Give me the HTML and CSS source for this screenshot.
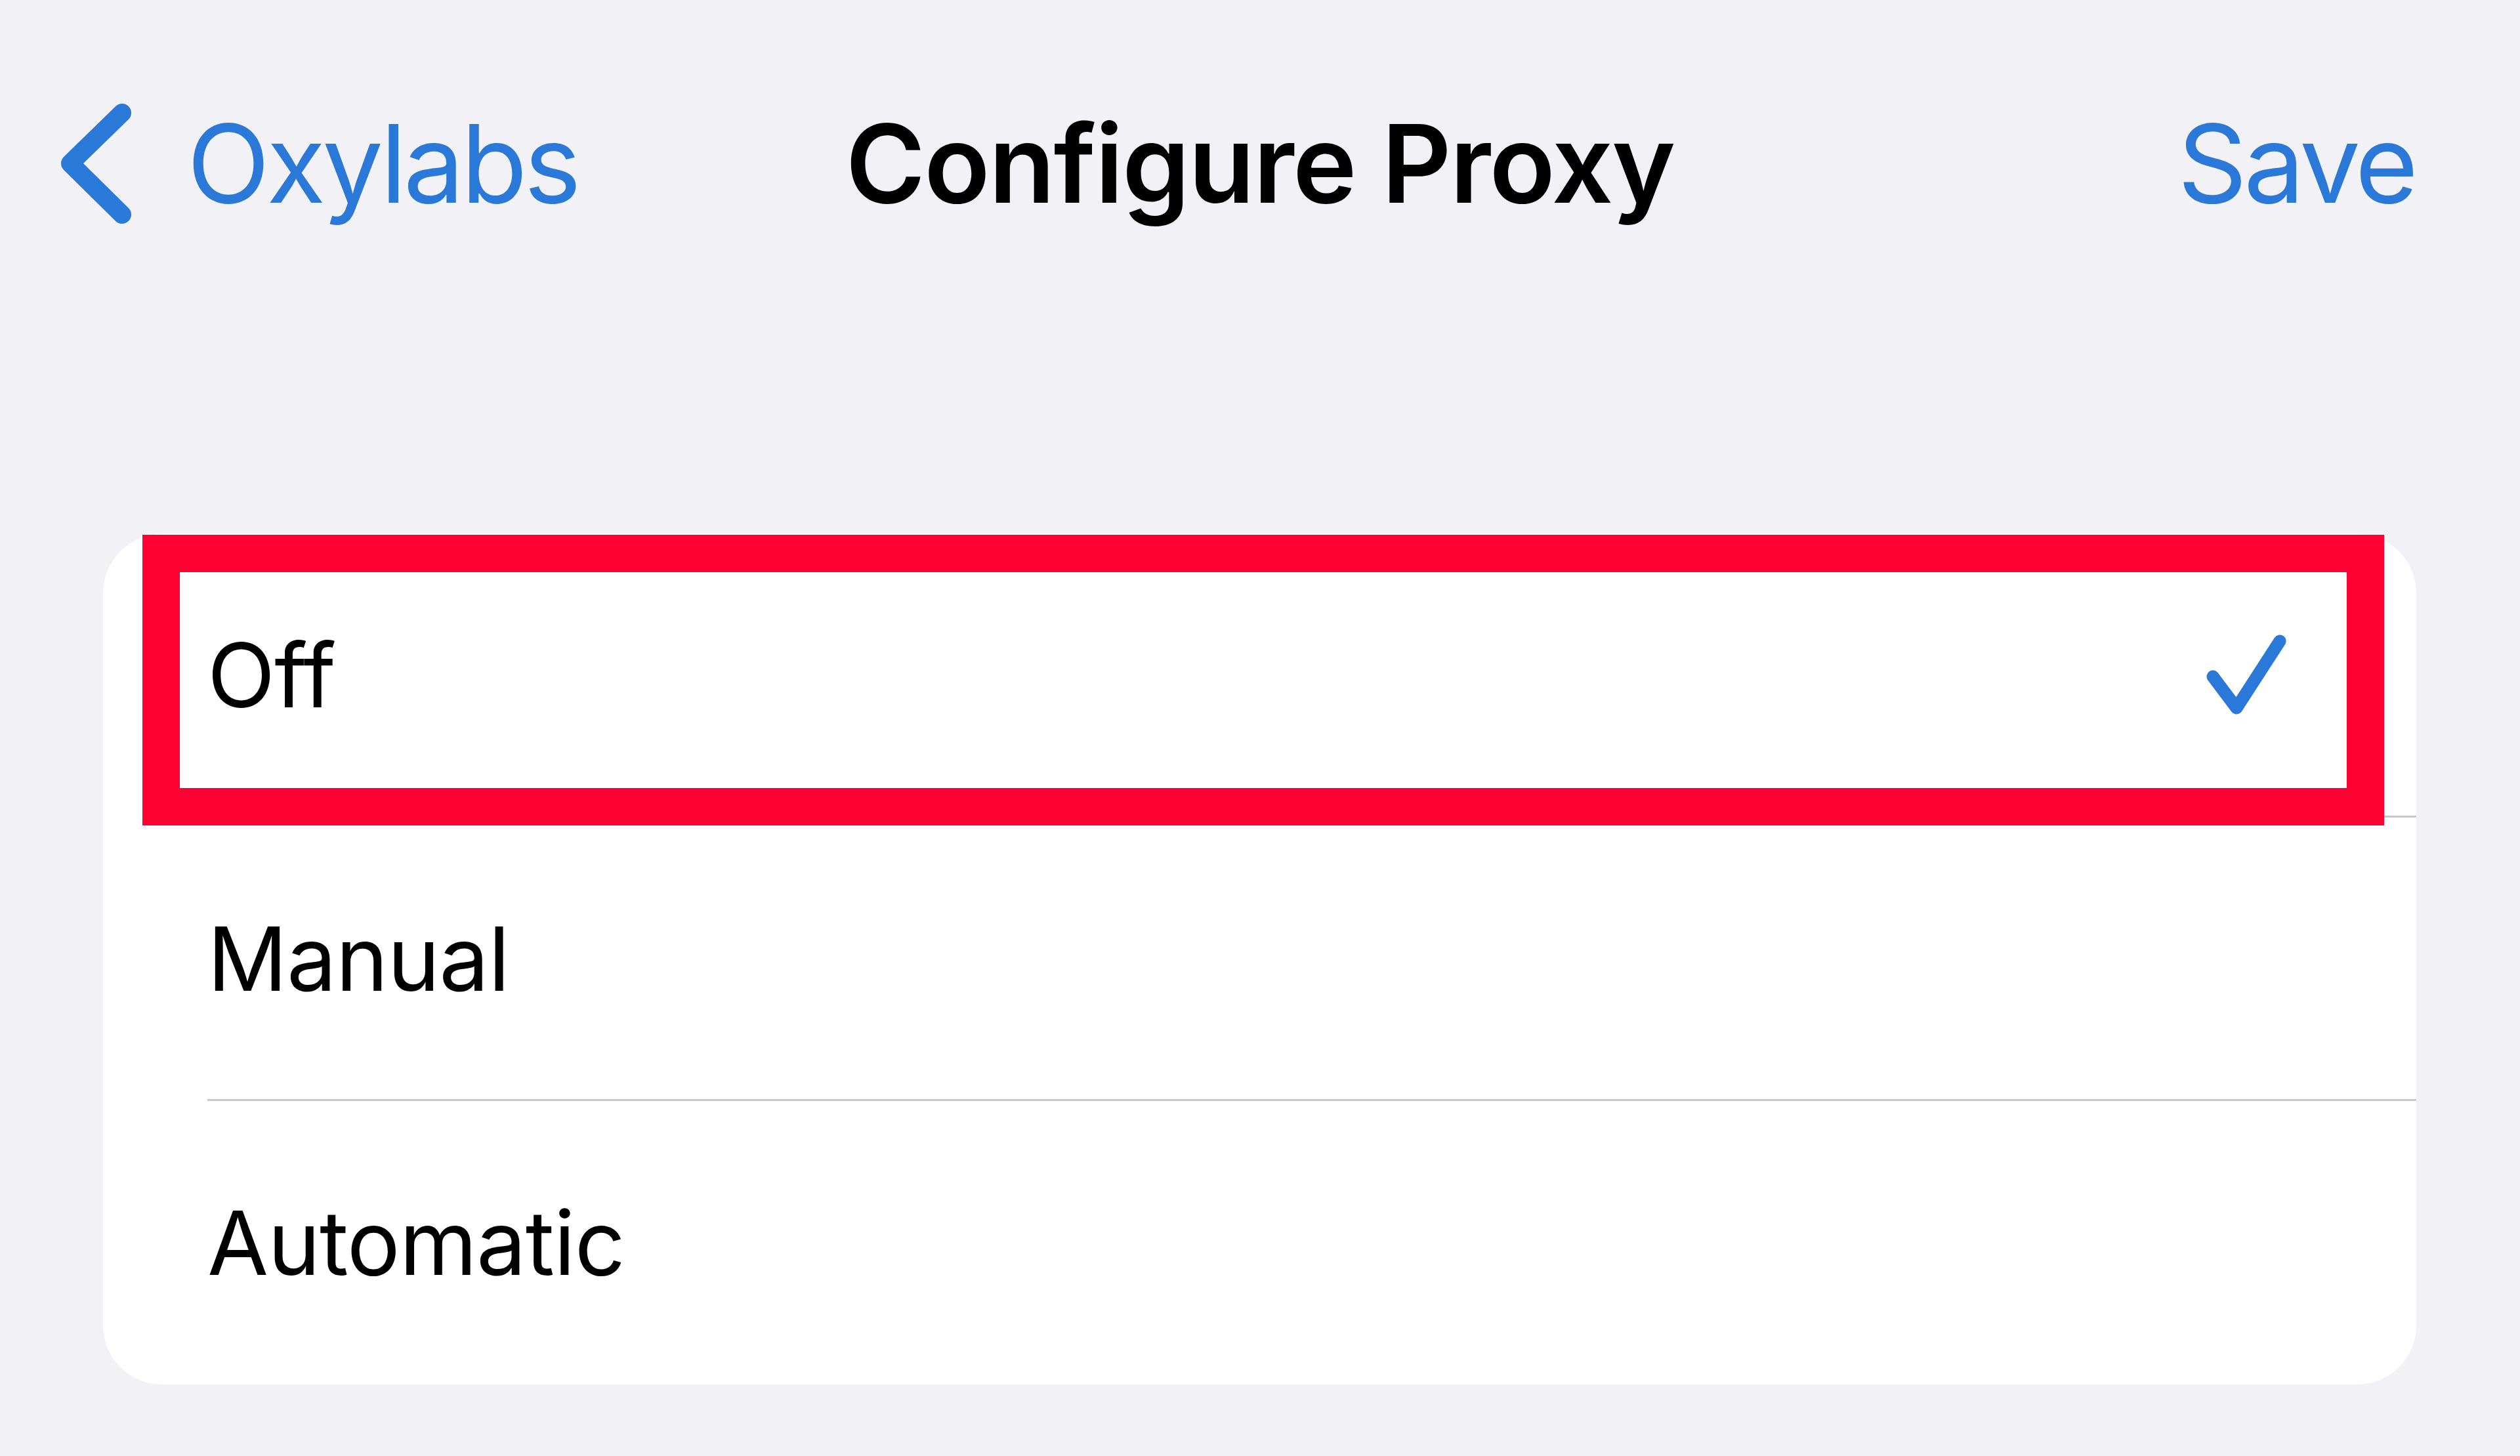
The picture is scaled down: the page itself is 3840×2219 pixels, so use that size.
FILE: index.html
```html
<!DOCTYPE html>
<html lang="en">
<head>
<meta charset="utf-8">
<title>Configure Proxy</title>
<link rel="stylesheet" href="styles.css">
</head>
<body>
<div class="screen">
  <header class="nav">
    <div class="nav-left">
      <svg class="chevron" viewBox="0 0 120 195" width="120" height="195" aria-hidden="true">
        <path d="M101 20 L22 97 L101 175" fill="none" stroke="currentColor" stroke-width="28" stroke-linecap="round" stroke-linejoin="round"/>
      </svg>
      <span class="nav-back">Oxylabs</span>
    </div>
    <h1 class="nav-title">Configure Proxy</h1>
    <div class="nav-right"><span class="nav-save">Save</span></div>
  </header>

  <section class="card">
    <div class="row">
      <span class="row-label">Off</span>
      <svg class="check" viewBox="0 0 126 128" width="126" height="128" aria-hidden="true">
        <path d="M12 66 L48 114 L114 12" fill="none" stroke="currentColor" stroke-width="19" stroke-linecap="round" stroke-linejoin="round"/>
      </svg>
    </div>
    <div class="row">
      <span class="row-label">Manual</span>
    </div>
    <div class="row row-last">
      <span class="row-label">Automatic</span>
    </div>
    <div class="highlight"></div>
  </section>
</div>
</body>
</html>
```

FILE: styles.css
```css
html, body {
  margin: 0;
  padding: 0;
}

body {
  background: #f1f1f6;
  font-family: "Inter", "Liberation Sans", sans-serif;
  font-variant-ligatures: none;
  font-feature-settings: "liga" 0, "calt" 0;
  color: #000;
  width: 3840px;
  height: 2219px;
  overflow: hidden;
}

.screen {
  padding-top: 149px;
}

.nav {
  display: grid;
  grid-template-columns: 1fr auto 1fr;
  align-items: center;
  height: 200px;
}

.nav-left {
  display: flex;
  align-items: center;
  padding-left: 85px;
  color: #2a78d8;
}

.chevron {
  display: block;
  flex: none;
}

.nav-back {
  margin-left: 80px;
  font-size: 165px;
  line-height: 200px;
  letter-spacing: -5px;
}

.nav-title {
  margin: 0;
  font-size: 165px;
  font-weight: 600;
  line-height: 200px;
  letter-spacing: -2px;
}

.nav-right {
  display: flex;
  justify-content: flex-end;
  padding-right: 160px;
  color: #2a78d8;
}

.nav-save {
  font-size: 165px;
  line-height: 200px;
  letter-spacing: -5px;
}

.card {
  position: relative;
  margin: 465px 158px 0 157px;
  background: #fff;
  border-radius: 90px;
}

.row {
  display: flex;
  align-items: center;
  justify-content: space-between;
  height: 432px;
  margin-left: 159px;
  padding-right: 196px;
  border-bottom: 3px solid #c8c8cc;
  box-sizing: border-box;
}

.row-last {
  border-bottom: none;
}

.row-label {
  font-size: 135px;
  letter-spacing: -1px;
}

.check {
  display: block;
  color: #2a78d8;
}

.highlight {
  position: absolute;
  left: 60px;
  top: 1px;
  width: 3416px;
  height: 443px;
  border: 57px solid #fe0234;
  box-sizing: border-box;
}
```
